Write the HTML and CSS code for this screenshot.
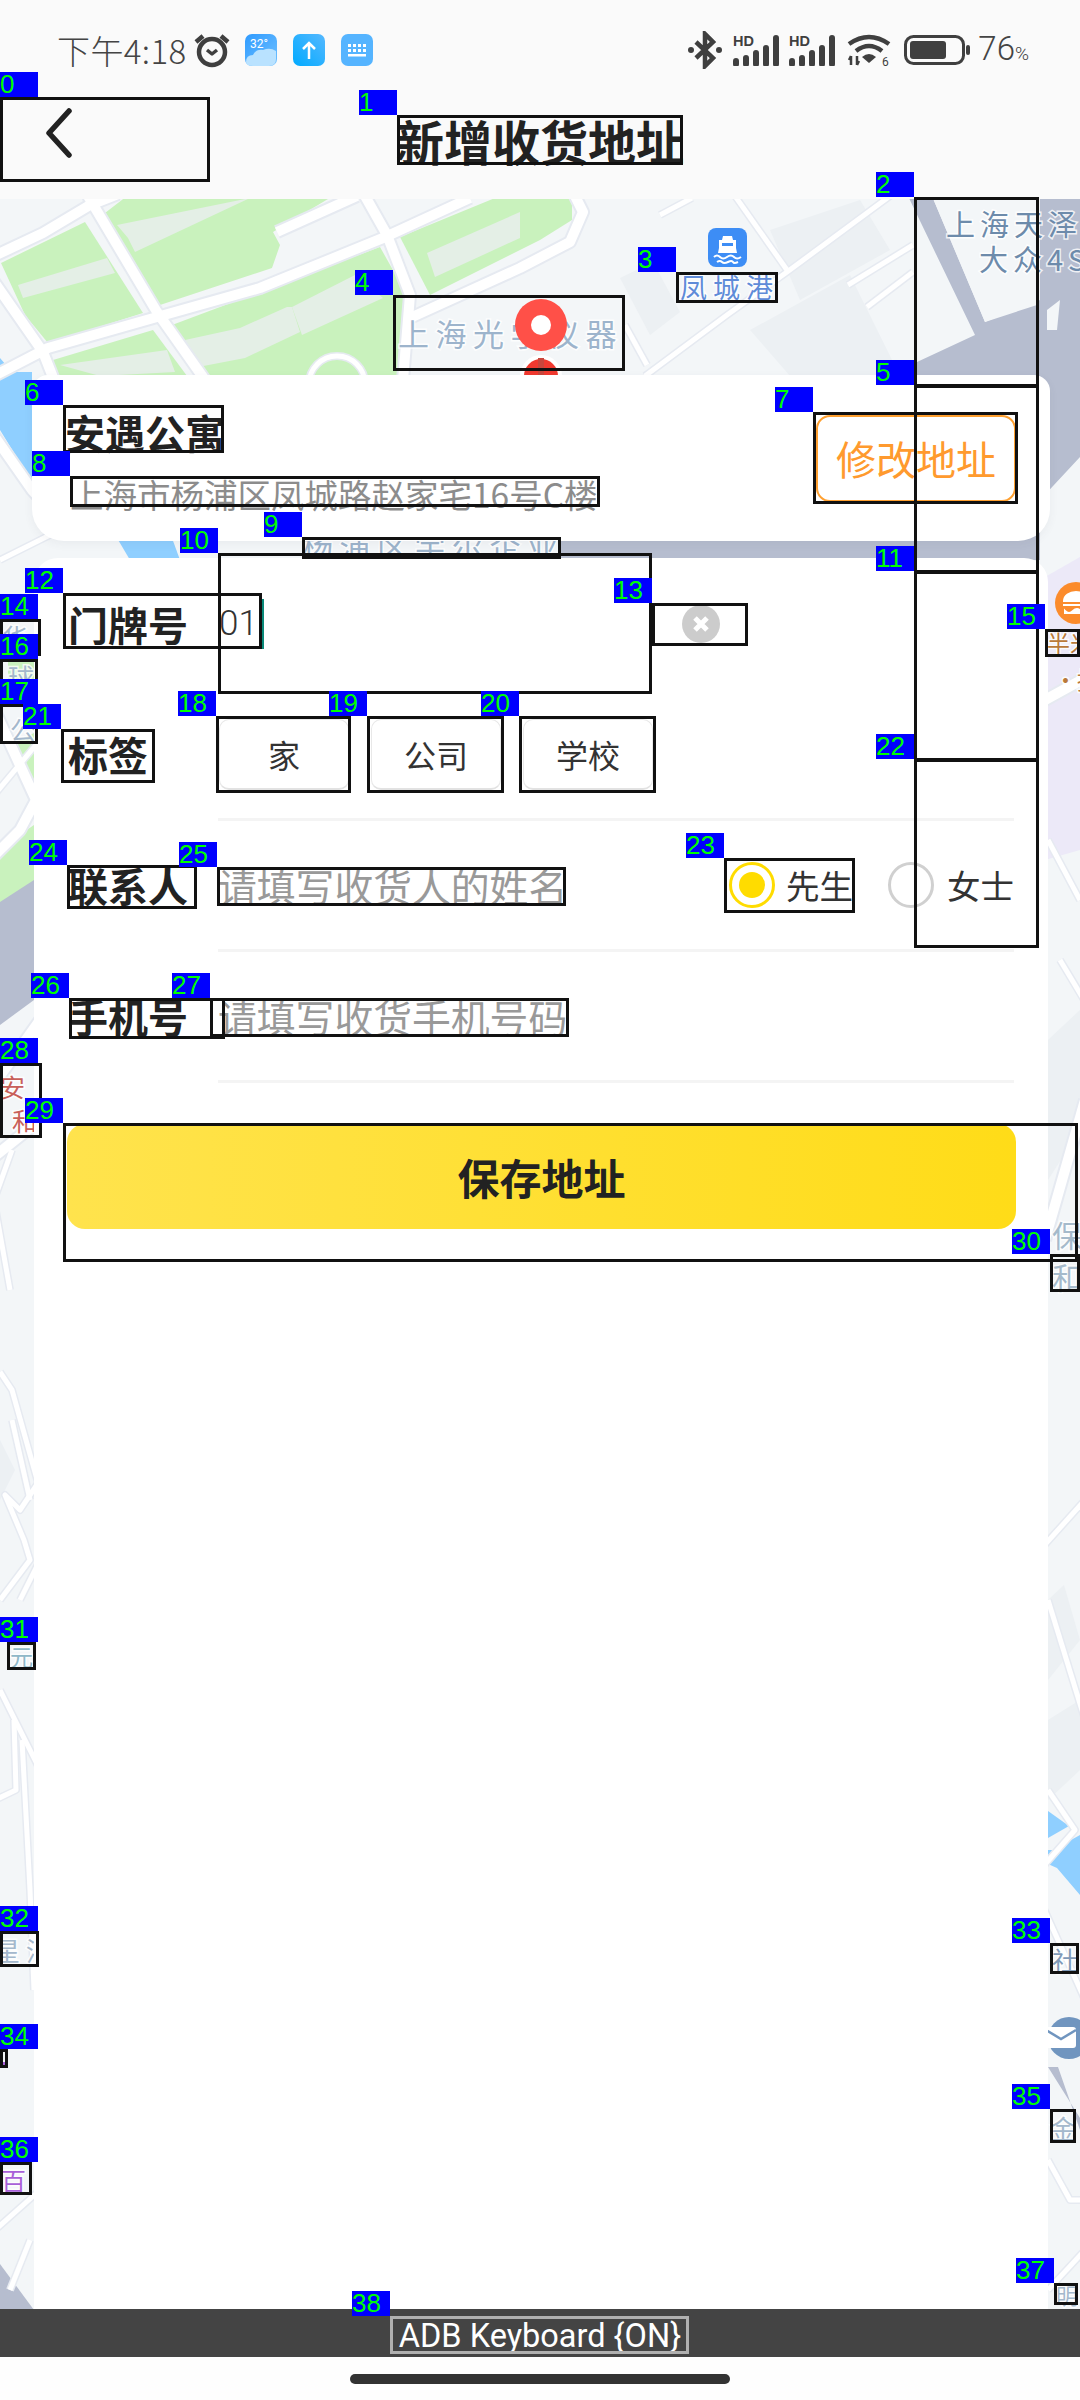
FILE: index.html
```html
<!DOCTYPE html>
<html lang="zh-CN">
<head>
<meta charset="utf-8">
<title>新增收货地址</title>
<link rel="stylesheet" href="styles.css">
</head>
<body>
<div class="screen">
  <svg class="map" width="1080" height="2400" viewBox="0 0 1080 2400">
    <defs>
      <g id="roads">
        <polyline class="w14" points="-10,378 48,348 157,317 260,288 383,238 470,198"/>
        <polyline class="w14" points="88,196 157,312 205,380"/>
        <polyline class="w14" points="365,196 387,235 410,295 403,380"/>
        <polyline class="w14" points="-10,258 43,233 90,205 118,194"/>
        <polyline class="w14" points="-10,276 43,352 54,380"/>
        <polyline class="w14" points="277,232 357,196"/>
        <polyline class="w14" points="410,318 520,268 570,242 583,212 575,196"/>
        <polyline class="w8" points="890,196 787,272 727,315 645,376"/>
        <polyline class="w8" points="735,196 787,270"/>
        <polyline class="w8" points="625,325 647,365"/>
        <polyline class="w8" points="660,215 692,198"/>
        <polyline class="w8" points="848,285 913,245"/>
        <polyline class="w8" points="867,307 913,272"/>
        <circle class="w8" cx="337" cy="384" r="28"/>
        <polyline class="w14" points="-10,430 32,490 60,520"/>
        <polyline class="w8" points="0,560 60,530"/>
        <polyline class="w14" points="-10,700 36,800 20,830 -10,860"/>
        <polyline class="w8" points="-10,800 40,740"/>
        <polyline class="w14" points="40,1020 -10,1090"/>
        <polyline class="w14" points="-10,1160 40,1120"/>
        <polyline class="w8" points="12,1150 -6,1200 10,1290"/>
        <polyline class="w8" points="0,1372 12,1390 40,1490"/>
        <polyline class="w8" points="12,1420 30,1500"/>
        <polyline class="w8" points="40,1480 20,1510 5,1495 24,1540 30,1560 0,1600"/>
        <polyline class="w8" points="20,1600 40,1560"/>
        <polyline class="w8" points="0,1690 15,1720 40,1770"/>
        <polyline class="w8" points="14,1720 16,1790 -5,1800"/>
        <polyline class="w8" points="22,1740 30,1890 34,1990"/>
        <polyline class="w8" points="-5,2230 40,2190"/>
        <polyline class="w8" points="10,2290 30,2240"/>
        <polyline class="w8" points="1040,1550 1085,1500"/>
        <polyline class="w8" points="1048,1600 1085,1720"/>
        <polyline class="w8" points="1048,1790 1075,1830 1040,1870"/>
        <polyline class="w8" points="1040,1900 1085,2000"/>
        <polyline class="w14" points="1045,1240 1085,1100"/>
        <polyline class="w8" points="1060,960 1090,1010"/>
        <polyline class="w14" points="1045,700 1085,678"/>
        <polyline class="w8" points="1048,840 1080,900"/>
        <polyline class="w8" points="1048,2160 1070,2200 1085,2200"/>
        <polyline class="w8" points="1048,2290 1085,2250"/>
      </g>
    </defs>
    <rect class="land" width="1080" height="2400"/>
    <polygon class="green" points="1,263 85,222 143,313 48,343 25,315"/>
    <polygon class="green" points="105,213 127,196 333,196 273,232 280,245 272,268 160,305"/>
    <polygon class="green" points="53,360 153,330 190,380 60,380"/>
    <polygon class="green" points="172,325 380,247 407,295 400,380 200,380"/>
    <polygon class="green" points="400,237 495,198 572,198 572,220 540,240 430,295"/>
    <polygon class="green" points="10,745 34,733 34,783 16,770"/>
    <polygon class="green" points="8,660 36,655 36,690 8,690"/>
    <polygon class="green" points="0,848 34,825 34,890 0,925"/>
    <polygon class="patch" points="117,225 250,198 135,252 128,238"/>
    <polygon class="patch" points="18,285 107,258 115,273 23,298"/>
    <polygon class="patch" points="185,340 240,328 287,307 292,307 300,332 245,358 193,368"/>
    <polygon class="patch" points="292,307 355,275 383,298 302,335"/>
    <polygon class="patch" points="427,253 520,212 520,238 435,277"/>
    <polygon class="patch" points="60,365 167,350 175,372 100,376"/>
    <polygon class="shade" points="620,278 653,262 680,312 650,335"/>
    <polygon class="shade" points="770,230 860,200 890,250 800,300"/>
    <polygon class="shade" points="750,330 850,275 900,376 790,376"/>
    <polygon class="shade" points="1048,1040 1080,1010 1080,1130 1048,1180"/>
    <polygon class="shade" points="1048,1600 1064,1585 1080,1640 1048,1680"/>
    <polygon class="shade" points="1048,1720 1080,1700 1080,1770 1048,1800"/>
    <polygon class="shade" points="0,1440 15,1470 0,1500"/>
    <polygon class="water" points="0,358 12,372 32,372 32,482 0,430"/>
    <polygon class="water" points="117,538 172,538 180,560 130,560"/>
    <polygon class="water" points="1048,1811 1069,1826 1048,1838"/>
    <polygon class="water" points="1053,1850 1080,1835 1080,1895 1057,1868 1048,1864 1048,1850"/>
    <polygon class="violet" points="1045,577 1080,557 1080,850 1045,860"/>
    <polygon class="highway" points="908,196 932,196 985,322 1040,300 1040,196 1080,196 1080,457 1040,500 1040,560 561,560 561,538 908,380 917,362 975,335"/>
    <polygon class="land" points="932,196 1037,196 1037,305 985,322"/>
    <polygon class="highway" points="0,902 34,880 34,1000 0,1025"/>
    <polygon class="highway" points="0,2264 34,2310 0,2310"/>
    <polygon class="highway" points="1048,2067 1058,2067 1080,2130 1080,2118"/>
    <use href="#roads" class="road-edge"/>
    <use href="#roads" class="road"/>
    <polygon class="arrow" points="1047,310 1060,300 1057,330 1047,330"/>

    <text class="lbl lbl-poi" x="398" y="346">上海光学仪器</text>
    <text class="lbl lbl-port" x="680" y="298">凤城港</text>
    <text class="lbl lbl-dark" x="946" y="236">上海天泽上</text>
    <text class="lbl lbl-dark" x="979" y="271">大众4S店</text>
    <text class="lbl lbl-poi" x="302" y="559">杨浦区宇尔企业</text>
    <text class="lbl lbl-s" x="2" y="648">华</text>
    <text class="lbl lbl-s" x="8" y="688">球</text>
    <text class="lbl lbl-s" x="10" y="740">公</text>
    <text class="lbl lbl-red" x="0" y="1097">安</text>
    <text class="lbl lbl-red" x="12" y="1131">和</text>
    <text class="lbl lbl-side" x="1052" y="1247">保</text>
    <text class="lbl lbl-side" x="1052" y="1289">和</text>
    <text class="lbl lbl-tiny" x="10" y="1666">元</text>
    <text class="lbl lbl-s" x="-6" y="1961">星 江</text>
    <text class="lbl lbl-s lbl-she" x="1052" y="1971">社</text>
    <text class="lbl lbl-s" x="1050" y="2139">金</text>
    <text class="lbl lbl-pur" x="1" y="2191">百</text>
    <text class="lbl lbl-tiny2" x="1056" y="2304">明</text>
    <text class="lbl lbl-or" x="1047" y="652">半米</text>
    <text class="lbl lbl-or" x="1054" y="689">·招</text>
    <rect class="purple-bit" x="0" y="2062" width="6" height="5"/>

    <g class="ship">
      <rect class="ship-bg" x="708" y="228" width="39" height="39" rx="8"/>
      <path class="ship-w" d="M723 236h9l1 4h3v8l1 5h-19l1-5v-8h3z"/>
      <rect class="ship-win" x="722" y="243" width="11" height="3"/>
      <path class="ship-wave" d="M714 257q3-3 6 0t7 0 7 0 7 0M717 262q3-2 5 0t6 0 5 0 5 0"/>
    </g>
    <circle class="halo" cx="541" cy="376" r="21"/>
    <circle class="pin-b" cx="541" cy="376" r="17"/>
    <rect class="pin-s" x="538" y="358" width="6" height="17"/>
    <circle class="pin-a" cx="541" cy="325" r="26"/>
    <circle class="halo" cx="541" cy="325" r="10"/>

    <circle class="burger" cx="1076" cy="603" r="21"/>
    <path class="burger-w" d="M1064 601a12 9 0 0 1 24 0zM1063 605h26M1065 611q4 4 8 0t8 0 8 0v2h-24z"/>
    <circle class="mail" cx="1069" cy="2038" r="21"/>
    <rect class="mail-w" x="1046" y="2027" width="30" height="21" rx="3"/>
    <path class="mail-l" d="M1046 2030l15 9 15-9"/>
  </svg>

  <header class="status">
    <div class="status-left">
      <span class="time">下午4:18</span>
      <svg class="ic-alarm" width="38" height="36" viewBox="0 0 38 36">
        <circle class="st4" cx="19" cy="20" r="13"/>
        <path class="st4" d="M3 10l7-6M35 10l-7-6"/>
        <path class="st3" d="M14 18l5 4 5-4"/>
      </svg>
      <svg class="ic-app" width="32" height="32" viewBox="0 0 32 32">
        <defs>
          <linearGradient id="gw" x1="0" y1="0" x2="1" y2="1"><stop offset="0" stop-color="#2f9bff"/><stop offset="1" stop-color="#6fc0ff"/></linearGradient>
          <linearGradient id="gu" x1="0" y1="1" x2="1" y2="0"><stop offset="0" stop-color="#00aaff"/><stop offset="1" stop-color="#55b8ff"/></linearGradient>
        </defs>
        <rect width="32" height="32" rx="7" fill="url(#gw)"/>
        <path d="M1 28q0-7 7-7 3-6 10-5 7-3 13 1v8q0 7-7 7H8q-7 0-7-4z" fill="#b9e2ff"/>
        <text class="wx" x="5" y="14">32°</text>
      </svg>
      <svg class="ic-app" width="32" height="32" viewBox="0 0 32 32">
        <rect width="32" height="32" rx="7" fill="url(#gu)"/>
        <path class="white2" d="M16 25V9M10 15l6-6 6 6"/>
      </svg>
      <svg class="ic-app" width="32" height="32" viewBox="0 0 32 32">
        <rect class="kb" width="32" height="32" rx="7"/>
        <path class="kbk" d="M7 10h3v3H7zM12 10h3v3h-3zM17 10h3v3h-3zM22 10h3v3h-3zM7 15h3v3H7zM12 15h3v3h-3zM17 15h3v3h-3zM22 15h3v3h-3zM7 20h18v2.500H7z"/>
      </svg>
    </div>
    <div class="status-right">
      <svg class="ic-bt" width="34" height="38" viewBox="0 0 34 38">
        <path class="st4" d="M8 11l17 16-8 8V3l8 8L8 27"/>
        <circle class="fill" cx="3" cy="19" r="3"/><circle class="fill" cx="31" cy="19" r="3"/>
      </svg>
      <svg class="ic-sig" width="46" height="32" viewBox="0 0 46 32">
        <text class="hd" x="0" y="12">HD</text>
        <path class="bars" d="M3 27v3M13 24v6M23 19v11M33 14v16M43 4v26"/>
      </svg>
      <svg class="ic-sig" width="46" height="32" viewBox="0 0 46 32">
        <text class="hd" x="0" y="12">HD</text>
        <path class="bars" d="M3 27v3M13 24v6M23 19v11M33 14v16M43 4v26"/>
      </svg>
      <svg class="ic-wifi" width="44" height="34" viewBox="0 0 44 34">
        <path class="st4" d="M2 11q20-14 40 0M9 18q13-10 26 0"/>
        <path class="fill" d="M15 24q7-6 14 0l-7 6z"/>
        <path class="st2" d="M4 23v9M2 27l2-4M10 23v9M12 28l-2 4"/>
        <text class="w6" x="35" y="33">6</text>
      </svg>
      <svg class="ic-bat" width="67" height="30" viewBox="0 0 67 30">
        <rect class="bat" x="1.500" y="1.500" width="58" height="27" rx="8"/>
        <rect class="fill" x="6" y="6" width="36" height="18" rx="3"/>
        <rect class="fill" x="62" y="10" width="4" height="10" rx="2"/>
      </svg>
      <span class="pct">76<small class="pct-s">%</small></span>
    </div>
  </header>

  <nav class="nav">
    <div class="back">
      <svg width="30" height="50" viewBox="0 0 30 50"><path class="chev" d="M25 3L5 25l20 22"/></svg>
    </div>
    <h1 class="title">新增收货地址</h1>
  </nav>

  <main class="content">
    <section class="card-addr">
      <div class="addr-text">
        <div class="addr-name">安遇公寓</div>
        <div class="addr-line">上海市杨浦区凤城路赵家宅16号C楼</div>
      </div>
      <button class="edit-btn">修改地址</button>
    </section>

    <section class="card-form">
      <div class="row">
        <div class="row-label">门牌号</div>
        <div class="field field-plain">
          <div class="input"><span class="input-val">01</span><span class="caret"></span></div>
          <svg class="clear" width="40" height="40" viewBox="0 0 40 40">
            <circle class="clear-bg" cx="20" cy="20" r="19"/>
            <path class="clear-x" d="M14 14l12 12M26 14L14 26"/>
          </svg>
        </div>
      </div>
      <div class="row">
        <div class="row-label">标签</div>
        <div class="field">
          <div class="tags">
            <span class="tag">家</span>
            <span class="tag">公司</span>
            <span class="tag">学校</span>
          </div>
        </div>
      </div>
      <div class="row">
        <div class="row-label">联系人</div>
        <div class="field">
          <span class="placeholder">请填写收货人的姓名</span>
          <div class="gender">
            <span class="radio radio-on"><i class="radio-dot"></i></span><span class="gender-t">先生</span>
            <span class="radio radio-off"></span><span class="gender-t gender-t2">女士</span>
          </div>
        </div>
      </div>
      <div class="row">
        <div class="row-label">手机号</div>
        <div class="field">
          <span class="placeholder">请填写收货手机号码</span>
        </div>
      </div>
      <button class="save">保存地址</button>
    </section>
  </main>

  <div class="ime">ADB Keyboard {ON}</div>
  <div class="gesture"><span class="pill"></span></div>

  <div class="marks">
    <div class="mark m0 edge"><span class="tagno">0</span></div>
    <div class="mark m1"><span class="tagno">1</span></div>
    <div class="mark m2"><span class="tagno">2</span></div>
    <div class="mark m3"><span class="tagno">3</span></div>
    <div class="mark m4"><span class="tagno">4</span></div>
    <div class="mark m5"><span class="tagno">5</span></div>
    <div class="mark m6"><span class="tagno">6</span></div>
    <div class="mark m7"><span class="tagno">7</span></div>
    <div class="mark m8"><span class="tagno">8</span></div>
    <div class="mark m9"><span class="tagno">9</span></div>
    <div class="mark m10"><span class="tagno">10</span></div>
    <div class="mark m11"><span class="tagno">11</span></div>
    <div class="mark m12"><span class="tagno">12</span></div>
    <div class="mark m13"><span class="tagno">13</span></div>
    <div class="mark m14 edge"><span class="tagno">14</span></div>
    <div class="mark m15"><span class="tagno">15</span></div>
    <div class="mark m16 edge"><span class="tagno">16</span></div>
    <div class="mark m17 edge"><span class="tagno">17</span></div>
    <div class="mark m18"><span class="tagno">18</span></div>
    <div class="mark m19"><span class="tagno">19</span></div>
    <div class="mark m20"><span class="tagno">20</span></div>
    <div class="mark m21"><span class="tagno">21</span></div>
    <div class="mark m22"><span class="tagno">22</span></div>
    <div class="mark m23"><span class="tagno">23</span></div>
    <div class="mark m24"><span class="tagno">24</span></div>
    <div class="mark m25"><span class="tagno">25</span></div>
    <div class="mark m26"><span class="tagno">26</span></div>
    <div class="mark m27"><span class="tagno">27</span></div>
    <div class="mark m28 edge"><span class="tagno">28</span></div>
    <div class="mark m29"><span class="tagno">29</span></div>
    <div class="mark m30"><span class="tagno">30</span></div>
    <div class="mark m31 edge7"><span class="tagno">31</span></div>
    <div class="mark m32 edge"><span class="tagno">32</span></div>
    <div class="mark m33"><span class="tagno">33</span></div>
    <div class="mark m34 edge"><span class="tagno">34</span></div>
    <div class="mark m35"><span class="tagno">35</span></div>
    <div class="mark m36 edge"><span class="tagno">36</span></div>
    <div class="mark m37"><span class="tagno">37</span></div>
    <div class="mark m38"><span class="tagno">38</span></div>
  </div>
</div>
</body>
</html>
```

FILE: styles.css
```css
* { box-sizing: border-box; }
html, body { margin: 0; padding: 0; }
body { font-family: "Noto Sans CJK SC", "Noto Sans", sans-serif; color: #222; }

.screen {
  position: relative;
  width: 1080px;
  height: 2400px;
  overflow: hidden;
  background: #fefefe;
  display: flex;
  flex-direction: column;
}

/* map canvas */
.map { position: absolute; left: 0; top: 0; }
.land { fill: #f3f6f8; }
.green { fill: #c9f2bd; }
.patch { fill: #e4efe6; }
.shade { fill: #ecf0f3; }
.water { fill: #8fcfff; }
.violet { fill: #ece9f8; }
.highway { fill: #b6bdcf; }
.arrow { fill: #f3f6f8; }
.road-edge { stroke: #e6eaf1; fill: none; --w14: 14px; --w8: 8px; }
.road { stroke: #fff; fill: none; --w14: 10px; --w8: 5px; }
.w14 { stroke-width: var(--w14); fill: none; stroke-linejoin: round; }
.w8 { stroke-width: var(--w8); fill: none; stroke-linejoin: round; }

.lbl {
  font-family: "Noto Sans CJK SC", sans-serif;
  paint-order: stroke;
  stroke: #fff;
  stroke-width: 3px;
  stroke-opacity: .8;
}
.lbl-poi { font-size: 31px; letter-spacing: 6.500px; fill: #9db4cc; }
.lbl-port { font-size: 27px; letter-spacing: 6px; fill: #5f8bd8; }
.lbl-dark { font-size: 29px; letter-spacing: 5px; fill: #6d8bab; }
.lbl-s { font-size: 26px; fill: #a4b8cc; }
.lbl-she { fill: #7f9ab8; }
.lbl-red { font-size: 25px; fill: #c8605a; }
.lbl-side { font-size: 30px; fill: #a5bacb; }
.lbl-tiny { font-size: 23px; fill: #8fb8c8; }
.lbl-tiny2 { font-size: 22px; fill: #a4b8cc; }
.lbl-pur { font-size: 25px; fill: #a860d8; }
.lbl-or { font-size: 23px; fill: #b9793a; }
.purple-bit { fill: #a860d8; }

.ship-bg { fill: #3d8df5; }
.ship-w { fill: #fff; }
.ship-win { fill: #3d8df5; }
.ship-wave { fill: none; stroke: #fff; stroke-width: 2px; }
.halo { fill: #fff; }
.pin-a { fill: #ff5048; }
.pin-b { fill: #f0392f; }
.pin-s { fill: #c9463c; }
.burger { fill: #fb8b2c; }
.burger-w { fill: #fff; stroke: #fff; stroke-width: 2px; }
.mail { fill: #7095bf; }
.mail-w { fill: #fff; }
.mail-l { fill: none; stroke: #7095bf; stroke-width: 2.500px; }

/* status bar */
.status {
  position: relative;
  height: 97px;
  flex: none;
  background: #fafafa;
  display: flex;
  justify-content: space-between;
  align-items: flex-start;
  padding: 32px 51px 0 57px;
}
.status-left, .status-right { display: flex; align-items: center; height: 36px; }
.time { font-size: 33px; font-weight: 300; color: #444; line-height: 36px; width: 136px; letter-spacing: .4px; }
.ic-alarm { margin-right: 14px; }
.ic-app { margin-right: 16px; }
.ic-app:last-child { margin-right: 0; }
.wx { font-family: "Roboto", sans-serif; font-size: 12px; fill: #fff; }
.white2 { fill: none; stroke: #fff; stroke-width: 2.500px; }
.kb { fill: #55b4ff; }
.kbk { fill: #fff; }
.st4 { fill: none; stroke: #3f3f3f; stroke-width: 4.500px; }
.st3 { fill: none; stroke: #3f3f3f; stroke-width: 3.500px; stroke-linejoin: round; }
.st2 { fill: none; stroke: #3f3f3f; stroke-width: 2.500px; }
.fill { fill: #3f3f3f; }
.ic-bt { margin-right: 11px; }
.ic-sig { margin-right: 10px; }
.ic-wifi { margin: 0 13px 0 2px; }
.ic-bat { margin-right: 7px; }
.hd { font-family: "Liberation Sans", sans-serif; font-size: 14.500px; font-weight: 700; fill: #3f3f3f; }
.bars { stroke: #3f3f3f; stroke-width: 6px; fill: none; stroke-linecap: round; }
.w6 { font-family: "Roboto", sans-serif; font-size: 12px; fill: #3f3f3f; }
.bat { fill: none; stroke: #3f3f3f; stroke-width: 3px; }
.pct { font-family: "Roboto", sans-serif; font-size: 33px; font-weight: 300; color: #444; line-height: 36px; padding-top: 3px; }
.pct-s { font-size: 19px; }

/* nav */
.nav {
  position: relative;
  height: 102px;
  flex: none;
  background: #fafafa;
}
.back { position: absolute; left: 44px; top: 11px; }
.chev { fill: none; stroke: #222; stroke-width: 5.500px; stroke-linecap: round; stroke-linejoin: round; }
.title {
  margin: 0;
  padding-top: 18px;
  text-align: center;
  font-size: 48px;
  line-height: 50px;
  font-weight: 700;
  color: #222;
}

/* content */
.content {
  position: relative;
  flex: 1;
  min-height: 0;
  display: flex;
  flex-direction: column;
  padding-top: 176px;
}
.card-addr {
  margin-left: 32px;
  width: 1018px;
  height: 166px;
  flex: none;
  background: #fff;
  border-radius: 16px 16px 32px 32px;
  box-shadow: 0 3px 10px rgba(60, 70, 90, .06);
  display: flex;
  align-items: center;
  justify-content: space-between;
  padding: 0 34px 0 33px;
}
.addr-name { font-size: 40px; line-height: 48px; font-weight: 700; color: #222; }
.addr-line { margin-top: 22px; font-size: 33.500px; line-height: 31px; color: #8c8c8c; white-space: nowrap; padding-left: 5px; }
.edit-btn {
  width: 200px;
  height: 87px;
  padding: 0;
  background: #fff;
  border: 2px solid #ffa030;
  border-radius: 14px;
  color: #ff9a2e;
  font: 40px "Noto Sans CJK SC", sans-serif;
}

.card-form {
  margin: 17px 0 0 34px;
  width: 1014px;
  flex: 1;
  min-height: 0;
  background: #fff;
  border-radius: 24px 24px 0 0;
  display: flex;
  flex-direction: column;
}
.row { display: flex; height: 131px; flex: none; padding-left: 34px; }
.row:first-child { height: 132px; }
.row-label { width: 150px; flex: none; font-size: 40px; font-weight: 700; color: #222; align-self: center; line-height: 44px; margin-top: -3px; }
.row:first-child .row-label { margin-top: 0; }
.field {
  flex: 1;
  margin-right: 34px;
  display: flex;
  align-items: center;
  border-bottom: 3px solid #f4f4f4;
}
.field-plain { border-bottom: 0; }
.input { width: 463px; display: flex; align-items: center; height: 50px; }
.input-val { font-family: "Roboto", sans-serif; font-size: 35px; font-weight: 300; color: #333; line-height: 50px; margin-left: 1px; }
.caret { width: 5px; height: 50px; background: #0a8a7a; margin-left: 1px; }
.clear-bg { fill: #ccc; }
.clear-x { stroke: #fff; stroke-width: 5px; fill: none; }
.tags { display: flex; gap: 22px; margin-left: 1px; }
.tag {
  width: 130px;
  height: 71px;
  background: #fff;
  border: 1px solid #e8e8e8;
  border-bottom: 2px solid #e2e2e2;
  border-radius: 10px;
  display: flex;
  align-items: center;
  justify-content: center;
  font-size: 32px;
  color: #333;
}
.placeholder { font-size: 38.800px; color: #999; line-height: 40px; white-space: nowrap; }
.gender { margin-left: auto; display: flex; align-items: center; }
.radio { width: 46px; height: 46px; border-radius: 50%; display: flex; align-items: center; justify-content: center; flex: none; }
.radio-on { border: 3px solid #ffdc00; }
.radio-off { border: 3px solid #d0d0d0; margin-left: 35px; }
.radio-dot { width: 26px; height: 26px; border-radius: 50%; background: #ffdc00; }
.gender-t { font-size: 33.500px; color: #333; margin-left: 11px; line-height: 40px; }
.gender-t2 { margin-left: 13px; }

.save {
  margin: 41px 0 0 33px;
  width: 949px;
  height: 105px;
  flex: none;
  padding: 0;
  border: 0;
  border-radius: 18px;
  background: linear-gradient(90deg, #ffe34d, #ffdc18);
  color: #222;
  font: 700 42px "Noto Sans CJK SC", sans-serif;
}

.ime {
  position: relative;
  height: 48px;
  flex: none;
  background: #444;
  color: #fff;
  text-align: center;
  font: 32.500px/54px "Roboto", sans-serif;
  overflow: hidden;
}
.gesture { position: relative; height: 43px; flex: none; background: #fefefe; display: flex; justify-content: center; padding-top: 17px; }
.pill { width: 380px; height: 10px; border-radius: 5px; background: #333; }

/* numbered overlay marks */
.marks { position: absolute; left: 0; top: 0; width: 1080px; height: 2400px; pointer-events: none; }
.mark { position: absolute; border: 3px solid #111; }
.tagno {
  position: absolute;
  left: -41px;
  top: -28px;
  width: 38px;
  height: 25px;
  background: #0000ff;
  color: #00ff00;
  font: 26px/25px "Liberation Sans", sans-serif;
  white-space: nowrap;
}
.edge .tagno { left: -3px; }
.edge7 .tagno { left: -10px; }
.m0 { left: 0; top: 97px; width: 210px; height: 85px; }
.m1 { left: 397px; top: 115px; width: 286px; height: 50px; }
.m2 { left: 914px; top: 197px; width: 125px; height: 190px; }
.m3 { left: 676px; top: 272px; width: 102px; height: 31px; }
.m4 { left: 393px; top: 295px; width: 232px; height: 76px; }
.m5 { left: 914px; top: 385px; width: 125px; height: 188px; }
.m6 { left: 63px; top: 405px; width: 161px; height: 48px; }
.m7 { left: 813px; top: 412px; width: 205px; height: 92px; }
.m8 { left: 70px; top: 476px; width: 530px; height: 31px; }
.m9 { left: 302px; top: 537px; width: 259px; height: 22px; }
.m10 { left: 218px; top: 553px; width: 434px; height: 141px; }
.m11 { left: 914px; top: 571px; width: 125px; height: 190px; }
.m12 { left: 63px; top: 593px; width: 199px; height: 56px; }
.m13 { left: 652px; top: 603px; width: 96px; height: 43px; }
.m14 { left: 0; top: 619px; width: 41px; height: 37px; }
.m15 { left: 1045px; top: 629px; width: 35px; height: 28px; }
.m16 { left: 0; top: 659px; width: 38px; height: 45px; }
.m17 { left: 0; top: 704px; width: 38px; height: 40px; }
.m18 { left: 216px; top: 716px; width: 135px; height: 77px; }
.m19 { left: 367px; top: 716px; width: 137px; height: 77px; }
.m20 { left: 519px; top: 716px; width: 137px; height: 77px; }
.m21 { left: 61px; top: 729px; width: 94px; height: 54px; }
.m22 { left: 914px; top: 759px; width: 125px; height: 189px; }
.m23 { left: 724px; top: 858px; width: 131px; height: 55px; }
.m24 { left: 67px; top: 865px; width: 130px; height: 44px; }
.m25 { left: 217px; top: 867px; width: 349px; height: 39px; }
.m26 { left: 69px; top: 998px; width: 156px; height: 41px; }
.m27 { left: 210px; top: 998px; width: 359px; height: 39px; }
.m28 { left: 0; top: 1063px; width: 42px; height: 75px; }
.m29 { left: 63px; top: 1123px; width: 1015px; height: 139px; }
.m30 { left: 1050px; top: 1254px; width: 30px; height: 38px; }
.m31 { left: 7px; top: 1642px; width: 29px; height: 28px; }
.m32 { left: 0; top: 1931px; width: 39px; height: 36px; }
.m33 { left: 1050px; top: 1943px; width: 29px; height: 31px; }
.m34 { left: 0; top: 2049px; width: 8px; height: 19px; }
.m35 { left: 1050px; top: 2109px; width: 26px; height: 34px; }
.m36 { left: 0; top: 2162px; width: 32px; height: 33px; }
.m37 { left: 1054px; top: 2283px; width: 24px; height: 22px; }
.m38 { left: 390px; top: 2316px; width: 299px; height: 38px; border-color: #b0b0b0; }
```
